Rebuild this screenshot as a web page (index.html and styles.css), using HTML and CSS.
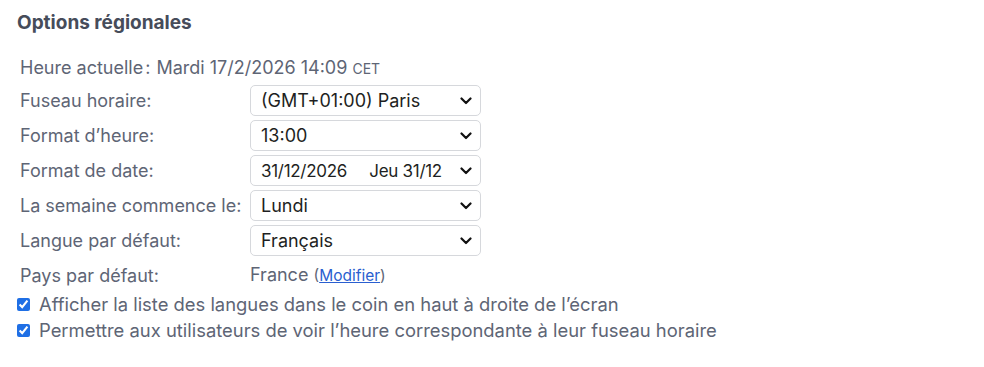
FILE: index.html
```html
<!DOCTYPE html>
<html lang="fr">
<head>
<meta charset="utf-8">
<title>Options régionales</title>
<link rel="stylesheet" href="styles.css">
</head>
<body>
<div class="panel">
  <h2 class="title">Options régionales</h2>
  <div class="now">Heure actuelle<span class="colon">:</span> Mardi 17/2/2026 14:09 <span class="tz">CET</span></div>
  <div class="form">
    <label class="lbl">Fuseau horaire:</label>
    <div class="sel"><select><option>(GMT+01:00) Paris</option></select><svg class="chev" viewBox="0 0 12 8" width="12" height="8"><path d="M1.5 1.5 L6 6 L10.5 1.5" fill="none" stroke="#111" stroke-width="2.2" stroke-linecap="round" stroke-linejoin="round"/></svg></div>

    <label class="lbl">Format d’heure:</label>
    <div class="sel"><select><option>13:00</option></select><svg class="chev" viewBox="0 0 12 8" width="12" height="8"><path d="M1.5 1.5 L6 6 L10.5 1.5" fill="none" stroke="#111" stroke-width="2.2" stroke-linecap="round" stroke-linejoin="round"/></svg></div>

    <label class="lbl">Format de date:</label>
    <div class="sel"><select class="date"><option>31/12/2026&nbsp;&nbsp;&nbsp;&nbsp;&nbsp;Jeu 31/12</option></select><svg class="chev" viewBox="0 0 12 8" width="12" height="8"><path d="M1.5 1.5 L6 6 L10.5 1.5" fill="none" stroke="#111" stroke-width="2.2" stroke-linecap="round" stroke-linejoin="round"/></svg></div>

    <label class="lbl">La semaine commence le:</label>
    <div class="sel"><select><option>Lundi</option></select><svg class="chev" viewBox="0 0 12 8" width="12" height="8"><path d="M1.5 1.5 L6 6 L10.5 1.5" fill="none" stroke="#111" stroke-width="2.2" stroke-linecap="round" stroke-linejoin="round"/></svg></div>

    <label class="lbl">Langue par défaut:</label>
    <div class="sel"><select><option>Français</option></select><svg class="chev" viewBox="0 0 12 8" width="12" height="8"><path d="M1.5 1.5 L6 6 L10.5 1.5" fill="none" stroke="#111" stroke-width="2.2" stroke-linecap="round" stroke-linejoin="round"/></svg></div>

    <span class="lbl">Pays par défaut:</span>
    <div class="val">France <span class="paren">(<a href="#">Modifier</a>)</span></div>
  </div>
  <label class="check"><input type="checkbox" checked> Afficher la liste des langues dans le coin en haut à droite de l’écran</label>
  <label class="check"><input type="checkbox" checked> Permettre aux utilisateurs de voir l’heure correspondante à leur fuseau horaire</label>
</div>
</body>
</html>
```

FILE: styles.css
```css
html, body {
  margin: 0;
  padding: 0;
  background: #ffffff;
}
body {
  font-family: Inter, "Liberation Sans", Arial, sans-serif;
  color: #5e6575;
  font-size: 18px;
}
.panel {
  padding: 10px 0 0 17px;
}
.title {
  margin: 0 0 20px 0;
  font-size: 19px;
  font-weight: 700;
  color: #464c5a;
  line-height: 26px;
}
.now {
  padding-left: 3px;
  line-height: 24px;
  margin-bottom: 4px;
}
.colon {
  margin-left: 2px;
  margin-right: 1px;
}
.tz {
  font-size: 14px;
}
.form {
  display: grid;
  grid-template-columns: 230px 231px;
  row-gap: 4px;
  align-items: center;
  padding-left: 3px;
}
.lbl {
  line-height: 31px;
}
.sel {
  position: relative;
  height: 31px;
}
.sel select {
  appearance: none;
  -webkit-appearance: none;
  width: 100%;
  height: 31px;
  box-sizing: border-box;
  border: 1px solid #d6d8dc;
  border-radius: 5px;
  background: #fff;
  font-family: Inter, "Liberation Sans", Arial, sans-serif;
  font-size: 18px;
  color: #1e1f22;
  padding: 0 22px 0 10px;
  margin: 0;
  outline: none;
}
.sel select.date {
  font-size: 17px;
  letter-spacing: -0.3px;
}
.chev {
  position: absolute;
  right: 9px;
  top: 12px;
  pointer-events: none;
}
.val {
  line-height: 28px;
}
.paren {
  font-size: 15.5px;
}
.val a {
  color: #2a5fd0;
  text-decoration: underline;
}
.check {
  display: flex;
  align-items: center;
  gap: 9px;
  line-height: 26px;
  padding-left: 0;
  font-size: 18.4px;
}
.check input {
  margin: 0;
  width: 13px;
  height: 13px;
  accent-color: #1f6fe5;
}
```
